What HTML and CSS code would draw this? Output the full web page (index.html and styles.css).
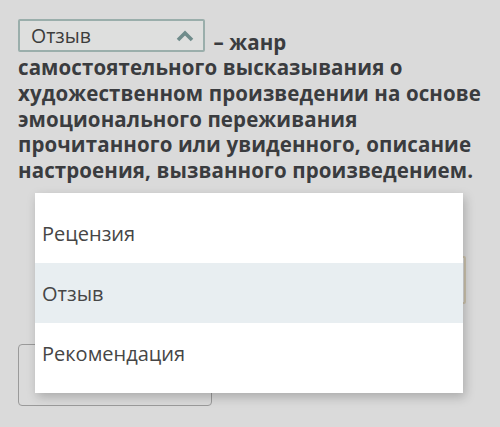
FILE: index.html
```html
<!DOCTYPE html>
<html lang="ru">
<head>
<meta charset="utf-8">
<link rel="stylesheet" href="styles.css">
</head>
<body>
<div class="page">
  <p class="question"><span class="select"><span class="select-value">Отзыв</span><svg class="chevron" width="18" height="12" viewBox="0 0 18 12"><path d="M2 10 L9 3 L16 10" fill="none" stroke="#6f8c8b" stroke-width="3.6" stroke-linejoin="miter"/></svg></span> – жанр самостоятельного высказывания о художественном произведении на основе эмоционального переживания прочитанного или увиденного, описание настроения, вызванного произведением.</p>
  <div class="hidden-field"></div>
  <div class="button"></div>
  <ul class="menu">
    <li class="menu-item">Рецензия</li>
    <li class="menu-item active">Отзыв</li>
    <li class="menu-item">Рекомендация</li>
  </ul>
</div>
</body>
</html>
```
FILE: styles.css
```css
html, body {
  margin: 0;
  padding: 0;
  background: #dadada;
  width: 500px;
  height: 427px;
  overflow: hidden;
}
.page {
  position: relative;
  padding: 29px 18px 0 18px;
  font-family: "Open Sans", "DejaVu Sans", sans-serif;
}
.question {
  margin: 0;
  font-weight: 700;
  font-size: 20.5px;
  letter-spacing: 0.1px;
  line-height: 25.7px;
  color: #3a3c3f;
}
.select {
  display: inline-flex;
  align-items: center;
  justify-content: space-between;
  box-sizing: border-box;
  width: 187px;
  height: 33px;
  padding: 0 9px 0 11px;
  border: 2px solid #9aaeab;
  border-radius: 2px;
  background: #dedfde;
  vertical-align: 7px;
  margin: -10px 3px -10px 0;
  letter-spacing: 0;
}
.select-value {
  font-weight: 400;
  font-size: 19.5px;
  color: #3c3c3c;
}
.chevron {
  display: block;
}
.hidden-field {
  box-sizing: border-box;
  margin: 72px 0 0 18px;
  width: 430px;
  height: 48px;
  border: 2px solid #cbc2ad;
  border-radius: 2px;
}
.button {
  box-sizing: border-box;
  margin-top: 40px;
  width: 194px;
  height: 62px;
  border: 1px solid #9a9a9a;
  border-radius: 4px;
}
.menu {
  position: absolute;
  left: 35px;
  top: 193px;
  width: 428px;
  margin: 0;
  padding: 10px 0;
  list-style: none;
  background: #ffffff;
  box-shadow: 2px 4px 10px rgba(0, 0, 0, 0.22);
}
.menu-item {
  height: 60px;
  display: flex;
  align-items: center;
  padding-left: 7px;
  font-size: 20px;
  color: #464646;
}
.menu-item.active {
  background: #e8eef1;
}
```
